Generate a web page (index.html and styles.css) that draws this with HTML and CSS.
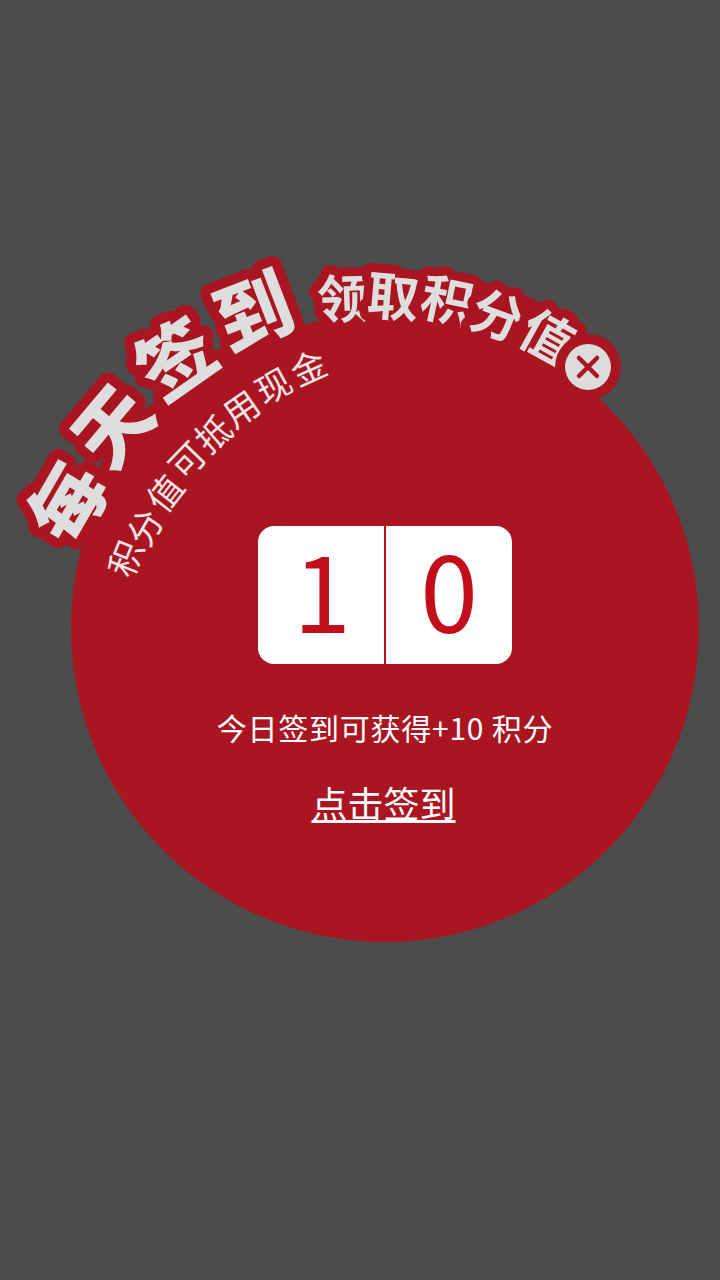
FILE: index.html
```html
<!DOCTYPE html>
<html lang="zh-CN">
<head>
	<meta charset="UTF-8">
	<title>每天签到</title>
	<link rel="stylesheet" href="styles.css">
</head>
<body>
	<main class="page">
		<section class="disc">
			<div class="score">
				<span class="digit">1</span>
				<span class="digit">0</span>
			</div>
			<p class="hint">今日签到可获得+10 积分</p>
			<a class="sign" href="#">点击签到</a>
		</section>

		<!-- arc heading, one glyph per transform -->
		<svg class="arc" viewBox="0 0 720 1280" width="720" height="1280">
			<path class="band" d="M334 300 Q400 288 470 304 T566 356"/>
			<g class="big">
				<text transform="translate(69 503) rotate(-60)" y="27">每</text>
				<text transform="translate(114 427) rotate(-50)" y="27">天</text>
				<text transform="translate(177 360) rotate(-35)" y="27">签</text>
				<text transform="translate(254 313) rotate(-21)" y="27">到</text>
			</g>
			<g class="mid">
				<text transform="translate(343 300) rotate(-2)" y="18">领</text>
				<text transform="translate(393 298) rotate(5)" y="18">取</text>
				<text transform="translate(447 302) rotate(12)" y="18">积</text>
				<text transform="translate(497 317) rotate(20)" y="18">分</text>
				<text transform="translate(547 338) rotate(29)" y="18">值</text>
			</g>
			<g class="small">
				<text transform="translate(127 559) rotate(-68)" y="12">积</text>
				<text transform="translate(146 528) rotate(-60)" y="12">分</text>
				<text transform="translate(166 494) rotate(-52)" y="12">值</text>
				<text transform="translate(188 461) rotate(-46)" y="12">可</text>
				<text transform="translate(214 435) rotate(-41)" y="12">抵</text>
				<text transform="translate(242 410) rotate(-35)" y="12">用</text>
				<text transform="translate(274 387) rotate(-29)" y="12">现</text>
				<text transform="translate(309 369) rotate(-24)" y="12">金</text>
			</g>
			<circle class="close-ring" cx="588" cy="367" r="33"/>
			<circle class="close-face" cx="588" cy="367" r="23"/>
			<path class="close-x" d="M579 358 L597 376 M597 358 L579 376"/>
		</svg>
	</main>
</body>
</html>
```

FILE: styles.css
```css
body {
	background: #4c4c4c;
	margin: 0;
	font-family: "Noto Sans CJK SC", "Noto Sans", sans-serif;
}
.page {
	height: 1280px;
	overflow: hidden;
	position: relative;
	padding: 314px 21px 0 71px;
	box-sizing: border-box;
}
.disc {
	align-items: center;
	background: #a91622;
	border-radius: 50%;
	box-sizing: border-box;
	color: #fff;
	display: flex;
	flex-direction: column;
	height: 628px;
	padding-top: 212px;
	width: 628px;
}
.score {
	background: #fff;
	border-radius: 16px;
	display: grid;
	grid-template-columns: 126px 128px;
	height: 138px;
	width: 254px;
}
.digit {
	color: #c30d19;
	font-size: 104px;
	font-weight: 400;
	line-height: 124px;
	text-align: center;
	text-indent: 2px;
}
.digit + .digit {
	border-left: 2px solid #c30d19;
	text-indent: 0;
}
.hint {
	font-size: 30px;
	font-weight: 400;
	letter-spacing: 0.75px;
	line-height: 44px;
	margin: 41px 0 0;
}
.sign {
	color: #fff;
	font-size: 36px;
	font-weight: 400;
	line-height: 52px;
	margin: 27px 3px 0 0;
}
.arc {
	left: 0;
	position: absolute;
	top: 0;
}
.arc text {
	paint-order: stroke;
	stroke-linejoin: round;
	text-anchor: middle;
}
.band {
	fill: none;
	stroke: #a91622;
	stroke-width: 50px;
}
.big text {
	fill: #dedede;
	font-size: 76px;
	font-weight: 900;
	stroke: #a91622;
	stroke-width: 20px;
}
.mid text {
	fill: #dedede;
	font-size: 52px;
	font-weight: 700;
	stroke: #a91622;
	stroke-width: 18px;
}
.small text {
	fill: #f0e4e4;
	font-size: 35px;
	font-weight: 400;
}
.close-ring {
	fill: #a91622;
}
.close-face {
	fill: #dcdcdc;
}
.close-x {
	fill: none;
	stroke: #a91622;
	stroke-linecap: round;
	stroke-width: 4.5px;
}
```
